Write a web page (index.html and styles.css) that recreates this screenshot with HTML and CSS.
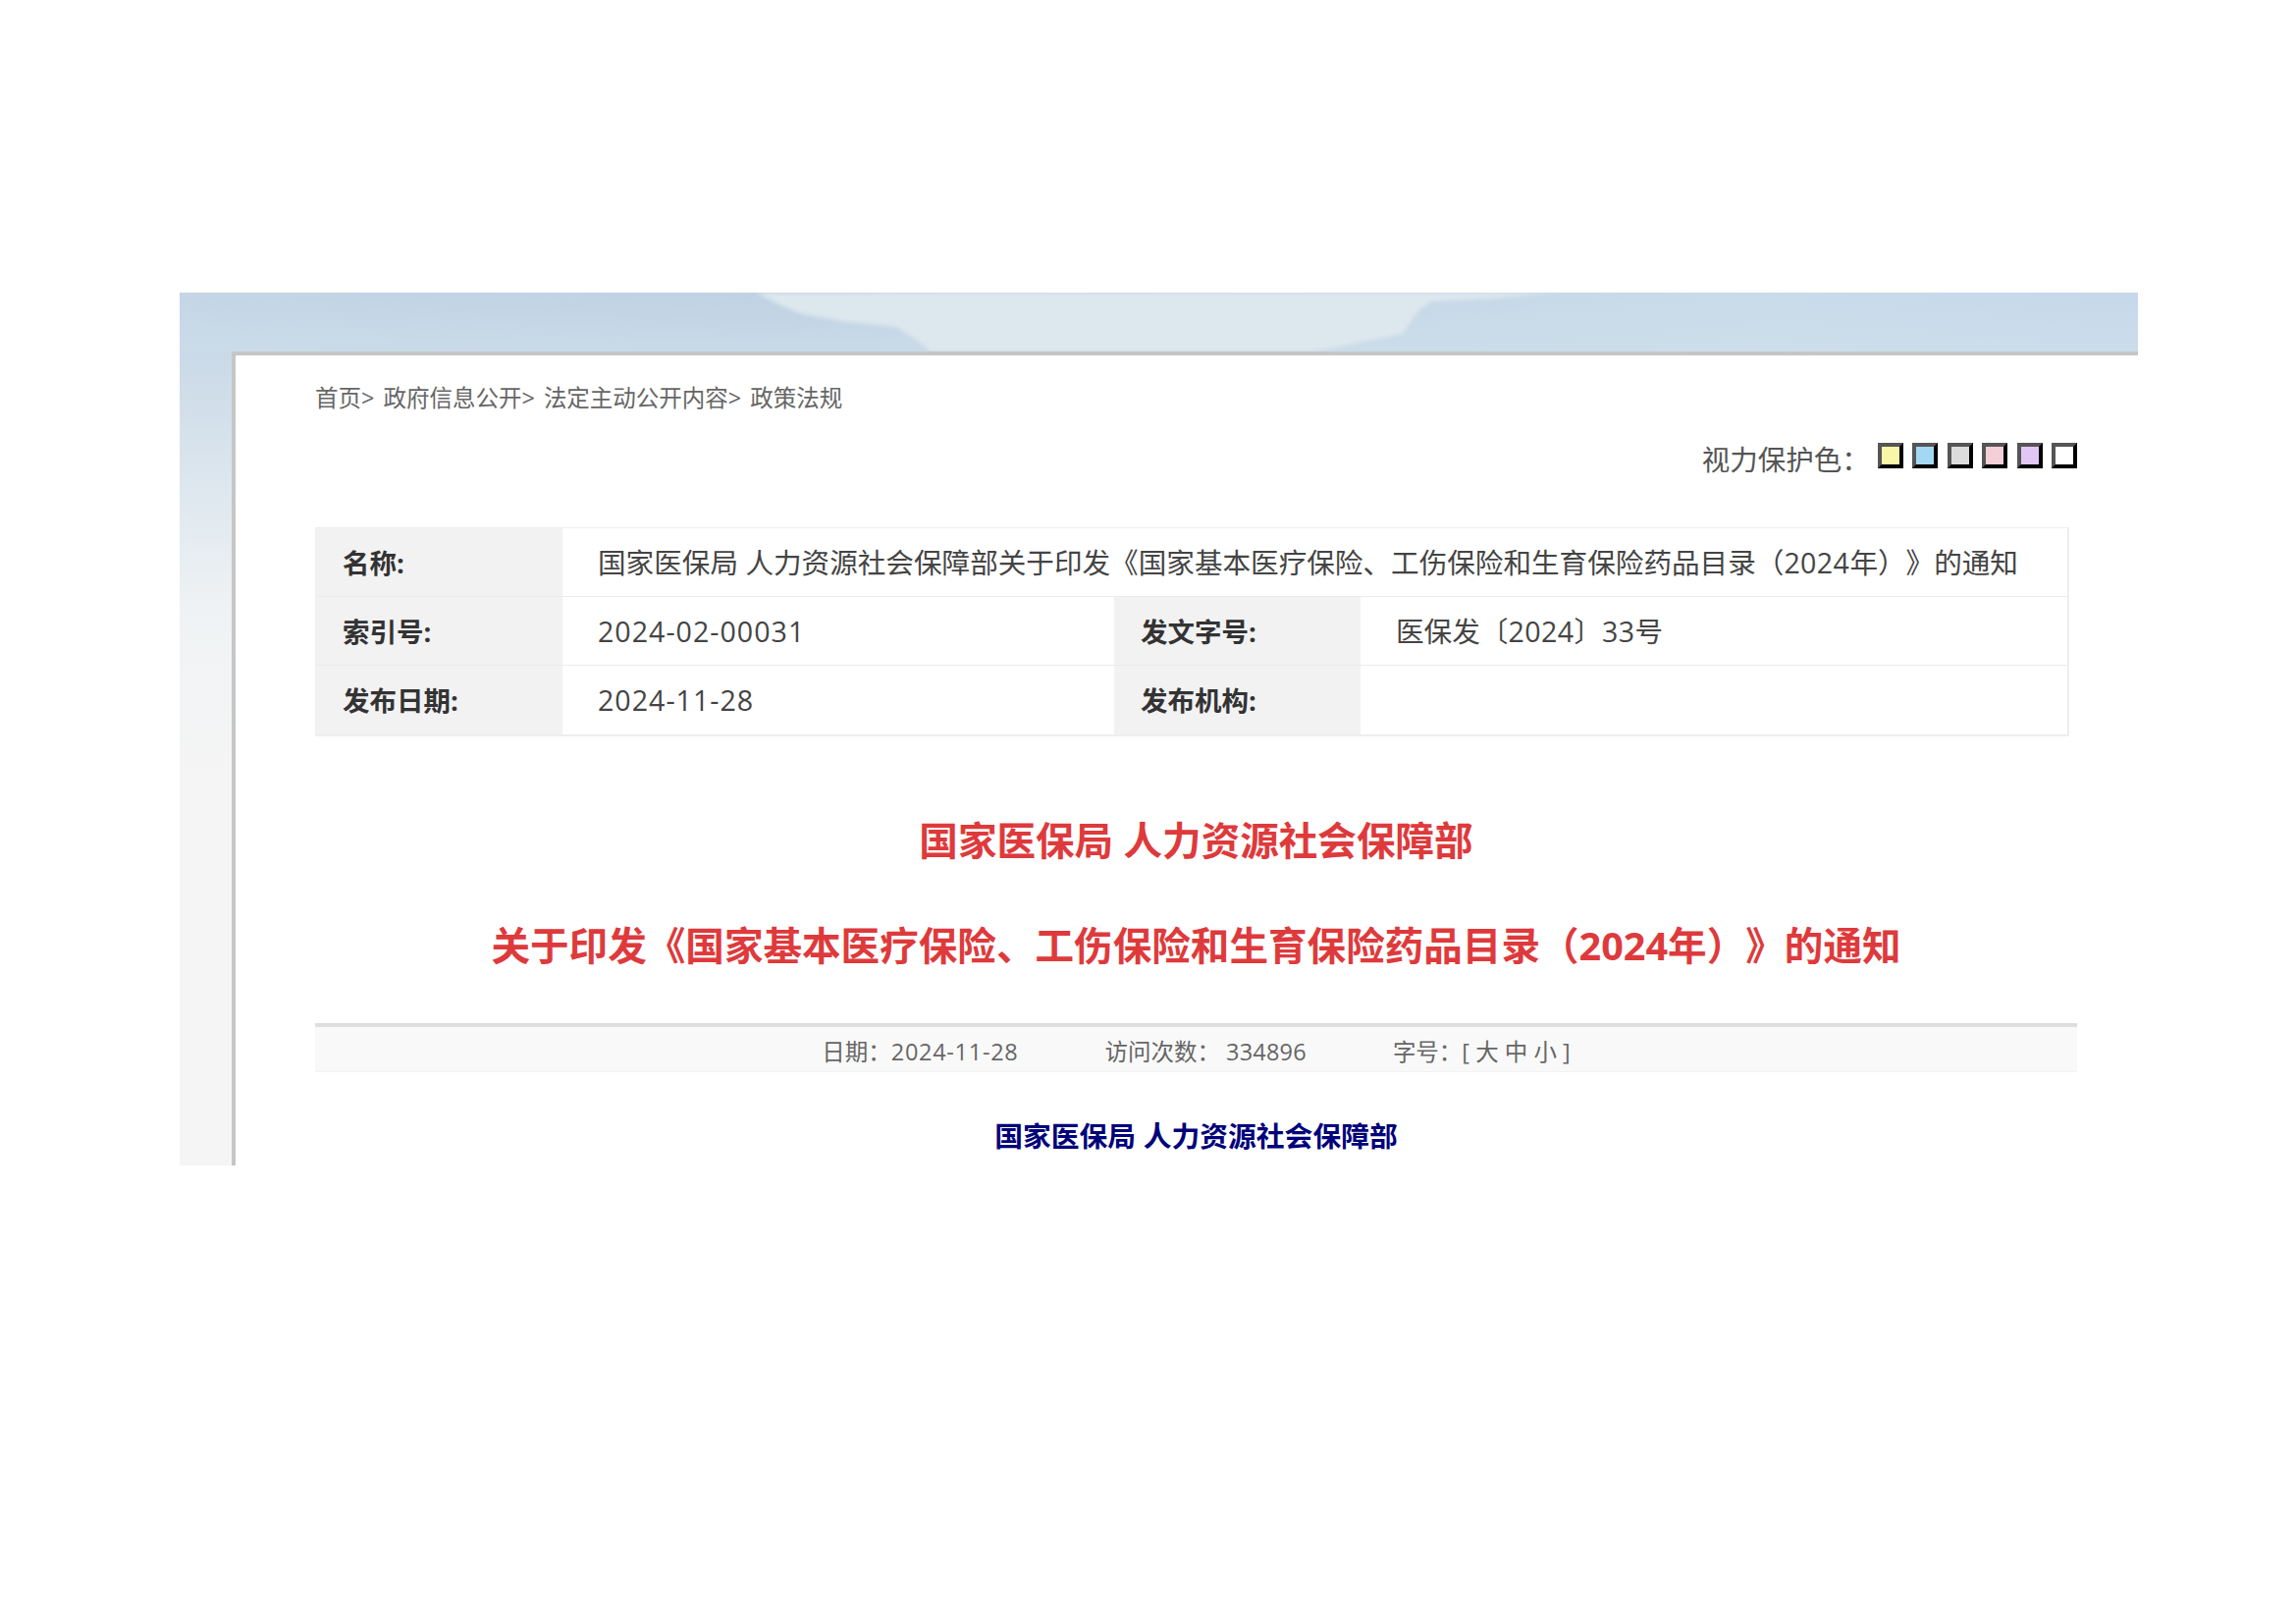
FILE: index.html
```html
<!DOCTYPE html>
<html lang="zh-CN">
<head>
<meta charset="utf-8">
<title>国家医保局 人力资源社会保障部关于印发《国家基本医疗保险、工伤保险和生育保险药品目录（2024年）》的通知</title>
<link rel="stylesheet" href="styles.css">
</head>
<body>
<div class="shot">
  <svg class="scenery" viewBox="0 0 1995 60" preserveAspectRatio="none" aria-hidden="true">
    <defs>
      <linearGradient id="sky" x1="0" y1="0" x2="1" y2="0">
        <stop offset="0" stop-color="#c4d5e5"/>
        <stop offset="0.3" stop-color="#bfd1e3"/>
        <stop offset="0.8" stop-color="#c9dbe9"/>
        <stop offset="1" stop-color="#c5d8ea"/>
      </linearGradient>
      <linearGradient id="haze" x1="0" y1="0" x2="0" y2="1">
        <stop offset="0" stop-color="#d2e2ec" stop-opacity="0"/>
        <stop offset="1" stop-color="#d2e2ec" stop-opacity="0.5"/>
      </linearGradient>
    </defs>
    <rect class="sky" width="1995" height="60"/>
    <rect class="haze" width="1995" height="60"/>
    <path class="ridge-light" d="M587 0 L610 12 L635 22 L680 30 L730 35 L750 48 L765 60 L1150 60 L1182 55 L1246 42 L1262 18 L1275 9 L1335 6 L1405 0 Z"/>
  </svg>
  <main class="card">
    <div class="inner">
      <nav class="crumbs">
        <span>首页&gt;</span>
        <span>政府信息公开&gt;</span>
        <span>法定主动公开内容&gt;</span>
        <span>政策法规</span>
      </nav>
      <div class="protect">
        <span class="protect-label">视力保护色：</span>
        <span class="swatch yellow"></span>
        <span class="swatch blue"></span>
        <span class="swatch grey"></span>
        <span class="swatch pink"></span>
        <span class="swatch purple"></span>
        <span class="swatch white"></span>
      </div>
      <div class="meta">
        <div class="meta-row">
          <div class="key">名称:</div>
          <div class="val">国家医保局 人力资源社会保障部关于印发《国家基本医疗保险、工伤保险和生育保险药品目录（<span class="num">2024</span>年）》的通知</div>
        </div>
        <div class="meta-row">
          <div class="key">索引号:</div>
          <div class="val half"><span class="code">2024-02-00031</span></div>
          <div class="key">发文字号:</div>
          <div class="val">医保发〔<span class="num">2024</span>〕<span class="num">33</span>号</div>
        </div>
        <div class="meta-row">
          <div class="key">发布日期:</div>
          <div class="val half"><span class="code">2024-11-28</span></div>
          <div class="key">发布机构:</div>
          <div class="val"></div>
        </div>
      </div>
      <h1 class="title">
        <span class="title-line">国家医保局 人力资源社会保障部</span>
        <span class="title-line">关于印发《国家基本医疗保险、工伤保险和生育保险药品目录（2024年）》的通知</span>
      </h1>
      <div class="info">
        <span>日期：<span class="info-date">2024-11-28</span></span>
        <span>访问次数： <span class="info-count">334896</span></span>
        <span>字号：[ 大 中 小 ]</span>
      </div>
      <p class="issuer">国家医保局 人力资源社会保障部</p>
    </div>
  </main>
</div>
</body>
</html>
```
FILE: styles.css
```css
* { box-sizing: border-box; }
html, body { margin: 0; background: #fff; }
body {
  font-family: "Open Sans", "Noto Sans CJK SC", sans-serif;
  color: #444;
  text-spacing-trim: space-all;
}

.shot {
  position: relative;
  margin: 298px 0 0 183px;
  width: 1995px;
  height: 889px;
  overflow: hidden;
  padding: 60px 0 0 53px;
  background: linear-gradient(180deg, #c4d5e5 0, #c9d9e7 60px, #dfe8ef 208px, #eff2f4 320px, #f5f5f5 490px);
}
.scenery { position: absolute; left: 0; top: 0; width: 1995px; height: 60px; }
.sky { fill: url(#sky); }
.haze { fill: url(#haze); }
.ridge-light { fill: #dde7ee; filter: blur(2px); }

.card {
  position: relative;
  height: 100%;
  background: #fff;
  border-left: 4px solid #c6c6c6;
  border-top: 4px solid #c6c6c6;
}
.inner { width: 1876px; padding-left: 81px; }

.crumbs {
  display: flex; gap: 9px;
  height: 57px; padding-top: 26px;
  font-size: 23.5px; line-height: 34px; color: #666;
}
.protect {
  display: flex; justify-content: flex-end; align-items: center;
  gap: 9.4px; height: 60px; margin-top: 18px; width: 1795px;
}
.protect-label { font-size: 28.5px; color: #555; margin-right: -1px; margin-top: -2px; }
.swatch { width: 26px; height: 26px; border: 4px solid; border-color: #555 #000 #000 #555; margin-top: -6px; }
.yellow { background: #faf6a8; }
.blue { background: #a3d8f2; }
.grey { background: #dcdcdc; }
.pink { background: #f5cfd8; }
.purple { background: #e2c6f5; }
.white { background: #fff; }

.meta { width: 1787px; margin-top: 40px; border: 1px solid #eeeeee; border-width: 1px 2px 2px 1px; }
.meta-row { display: flex; height: 70px; border-bottom: 1px solid #ebebeb; }
.meta-row:last-child { border-bottom: 0; }
.key {
  flex: 0 0 251px; background: #f2f2f2;
  padding-left: 27px; font-size: 27.5px; font-weight: 700; line-height: 72px; color: #333;
}
.val { flex: 1; padding-left: 36px; font-size: 28.6px; line-height: 69px; color: #444; white-space: nowrap; }
.val.half { flex: 0 0 562px; }
.num { letter-spacing: .4px; }
.code { letter-spacing: 1px; }

.title { margin: 53px 0 0; width: 1795px; text-align: center; font-size: 39.6px; font-weight: 700; color: #de3a3c; }
.title-line { display: block; height: 107px; line-height: 107px; }

.info {
  display: flex; justify-content: center; gap: 88px;
  width: 1795px; height: 50px; margin-top: 25px;
  background: #f9f9f9; border-top: 4px solid #dedede; border-bottom: 1px solid #f3f3f3;
  font-size: 23.5px; line-height: 50px; color: #666;
}
.info-date { letter-spacing: .7px; }
.info-count { letter-spacing: .2px; }
.issuer { margin: 44px 0 0; width: 1795px; text-align: center; font-size: 28.8px; line-height: 42px; font-weight: 700; color: #00007a; }
```
